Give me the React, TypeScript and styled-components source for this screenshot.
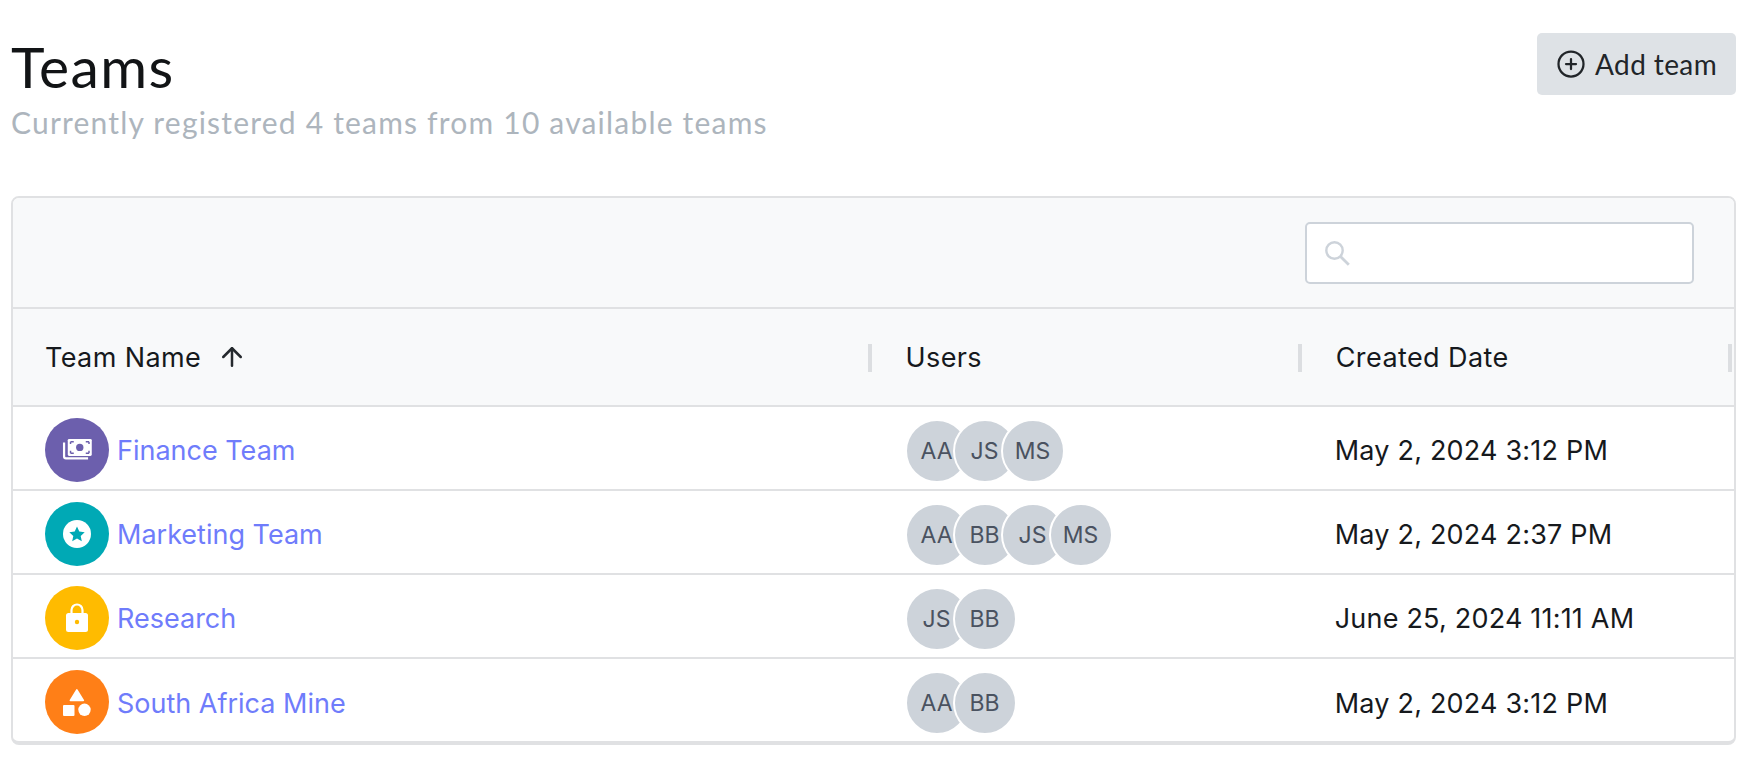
import React from "react";
import styled, { createGlobalStyle } from "styled-components";
import { ArrowUp, CirclePlus } from "lucide-react";

const GlobalStyle = createGlobalStyle`
  html, body {
    margin: 0;
    background: #ffffff;
    font-family: Inter, "Liberation Sans", sans-serif;
  }
`;

const SearchIcon = () => (
  <svg width="25" height="25" viewBox="0 0 25 25" fill="none" stroke="#cdd3da">
    <circle cx="9.5" cy="9.5" r="8.2" strokeWidth="2.4" />
    <path d="M15.5 15.5l8.3 8.3" strokeWidth="2.8" />
  </svg>
);

const MoneyIcon = () => (
  <svg width="30" height="24" viewBox="0 0 32 26" fill="none">
    <path d="M2 5v15a2 2 0 0 0 2 2h24" stroke="#fff" strokeWidth="2.4" />
    <rect x="6" y="1" width="26" height="18.5" rx="1.5" fill="#fff" />
    <circle cx="19" cy="10.2" r="4" fill="#6c5fad" />
    <path d="M9 4h3.5M9 4v2.6M29 4h-3.5M29 4v2.6M9 16.4h3.5M9 16.4v-2.6M29 16.4h-3.5M29 16.4v-2.6" stroke="#6c5fad" strokeWidth="1.6" />
  </svg>
);

const StarIcon = () => (
  <svg width="28" height="28" viewBox="0 0 28 28">
    <circle cx="14" cy="14" r="14" fill="#fff" />
    <path d="M14 6.6l2.3 5 5.4.6-4 3.7 1.1 5.4-4.8-2.7-4.8 2.7 1.1-5.4-4-3.7 5.4-.6z" fill="#00a9b5" />
  </svg>
);

const LockIcon = () => (
  <svg width="24" height="29" viewBox="0 0 24 29" fill="none">
    <path d="M6.5 12V7a5.5 5.5 0 0 1 11 0v5" stroke="#fff" strokeWidth="2.2" />
    <rect x="1" y="10" width="22" height="19" rx="2.5" fill="#fff" />
    <circle cx="12" cy="19" r="2.2" fill="#ffbb00" />
  </svg>
);

const ShapesIcon = () => (
  <svg width="28" height="27" viewBox="0 0 28 27" fill="#fff">
    <path d="M13 0.8a1 1 0 0 1 1.7 0l6.3 10.2a.8.8 0 0 1-.7 1.2H7.4a.8.8 0 0 1-.7-1.2z" />
    <rect x="0" y="16" width="11.5" height="11" rx="1" />
    <circle cx="21.5" cy="20.8" r="6.2" />
  </svg>
);

const teams = [
  { name: "Finance Team", color: "#6c5fad", icon: <MoneyIcon />, users: ["AA", "JS", "MS"], date: "May 2, 2024 3:12 PM" },
  { name: "Marketing Team", color: "#00a9b5", icon: <StarIcon />, users: ["AA", "BB", "JS", "MS"], date: "May 2, 2024 2:37 PM" },
  { name: "Research", color: "#ffbb00", icon: <LockIcon />, users: ["JS", "BB"], date: "June 25, 2024 11:11 AM" },
  { name: "South Africa Mine", color: "#ff7f17", icon: <ShapesIcon />, users: ["AA", "BB"], date: "May 2, 2024 3:12 PM" },
];

export default function App() {
  return (
    <Page>
      <GlobalStyle />
      <Header>
        <div>
          <Title>Teams</Title>
          <Subtitle>Currently registered 4 teams from 10 available teams</Subtitle>
        </div>
        <AddButton>
          <CirclePlus size={30} strokeWidth={1.8} />
          Add team
        </AddButton>
      </Header>

      <Card>
        <Toolbar>
          <SearchBox>
            <SearchIcon />
          </SearchBox>
        </Toolbar>
        <Table>
          <colgroup>
            <col style={{ width: "50%" }} />
            <col style={{ width: "25%" }} />
            <col style={{ width: "25%" }} />
          </colgroup>
          <thead>
            <tr>
              <HeadCell>
                <HeadLabel>
                  Team Name
                  <ArrowUp size={30} strokeWidth={2} color="#25292e" />
                </HeadLabel>
              </HeadCell>
              <HeadCell>Users</HeadCell>
              <HeadCell>Created Date</HeadCell>
            </tr>
          </thead>
          <tbody>
            {teams.map((team) => (
              <tr key={team.name}>
                <Cell>
                  <NameWrap>
                    <TeamBadge $color={team.color}>{team.icon}</TeamBadge>
                    <TeamLink href="#">{team.name}</TeamLink>
                  </NameWrap>
                </Cell>
                <Cell>
                  <Stack>
                    {team.users.map((user) => (
                      <Avatar key={user}>{user}</Avatar>
                    ))}
                  </Stack>
                </Cell>
                <DateCell>{team.date}</DateCell>
              </tr>
            ))}
          </tbody>
        </Table>
      </Card>
    </Page>
  );
}

const Page = styled.div`
  box-sizing: border-box;
  width: 1756px;
  height: 782px;
  padding: 33px 20px 0 11px;
  overflow: hidden;
  color: #16191d;
`;

const Header = styled.header`
  display: flex;
  justify-content: space-between;
  align-items: flex-start;
  height: 163px;
`;

const Title = styled.h1`
  margin: 0;
  font-family: Lato, sans-serif;
  font-size: 57px;
  font-weight: 400;
  line-height: 66px;
  letter-spacing: 1.4px;
  color: #121416;
`;

const Subtitle = styled.p`
  margin: 3px 0 0;
  font-family: Lato, sans-serif;
  font-size: 30px;
  line-height: 40px;
  letter-spacing: 1.2px;
  color: #adb5bd;
`;

const AddButton = styled.button`
  display: flex;
  align-items: center;
  gap: 9px;
  box-sizing: border-box;
  width: 199px;
  height: 62px;
  padding: 0 16px 0 19px;
  border: 0;
  border-radius: 5px;
  background: #dee2e6;
  font-family: Lato, sans-serif;
  font-size: 28px;
  letter-spacing: 0.4px;
  white-space: nowrap;
  color: #212529;
`;

const Card = styled.section`
  box-sizing: border-box;
  height: 549px;
  border: 2px solid #e0e1e3;
  border-bottom-width: 4px;
  border-radius: 8px;
  overflow: hidden;
`;

const Toolbar = styled.div`
  display: flex;
  justify-content: flex-end;
  box-sizing: border-box;
  height: 111px;
  padding: 24px 40px 0 0;
  border-bottom: 2px solid #e0e1e3;
  background: #f8f9fa;
`;

const SearchBox = styled.div`
  display: flex;
  align-items: center;
  box-sizing: border-box;
  width: 389px;
  height: 62px;
  padding-left: 18px;
  border: 2px solid #cdd3da;
  border-radius: 5px;
  background: #ffffff;
`;

const Table = styled.table`
  width: 100%;
  table-layout: fixed;
  border-collapse: collapse;
  font-size: 27px;
`;

const HeadCell = styled.th`
  position: relative;
  box-sizing: border-box;
  height: 97px;
  padding: 0 32px;
  border-bottom: 2px solid #e0e1e3;
  background: #f8f9fa;
  text-align: left;
  font-weight: 400;
  letter-spacing: 0.4px;
  color: #16191d;

  &::after {
    content: "";
    position: absolute;
    top: 35px;
    right: 2px;
    width: 4px;
    height: 28px;
    background: #dcdee1;
  }
`;

const HeadLabel = styled.span`
  display: inline-flex;
  align-items: center;
  gap: 16px;
`;

const Cell = styled.td`
  box-sizing: border-box;
  height: 84px;
  padding: 3px 32px 0;
  border-bottom: 2px solid #e0e1e3;

  tr:last-child > & {
    border-bottom: 0;
  }
`;

const DateCell = styled(Cell)`
  padding: 5px 0 0 31px;
  white-space: nowrap;
  letter-spacing: 0.2px;
  color: #16191d;
`;

const NameWrap = styled.div`
  display: flex;
  align-items: center;
  gap: 8px;
`;

const TeamBadge = styled.span<{ $color: string }>`
  display: flex;
  align-items: center;
  justify-content: center;
  flex: none;
  width: 64px;
  height: 64px;
  border-radius: 50%;
  background: ${({ $color }) => $color};
`;

const TeamLink = styled.a`
  padding-top: 2px;
  color: #6f7cfb;
  text-decoration: none;
`;

const Stack = styled.div`
  display: flex;
  margin: 2px 0 0 -1px;
`;

const Avatar = styled.span`
  display: flex;
  align-items: center;
  justify-content: center;
  box-sizing: border-box;
  width: 64px;
  height: 64px;
  margin-left: -16px;
  border: 2px solid #ffffff;
  border-radius: 50%;
  background: #cdd3da;
  font-size: 23px;
  color: #4a5260;

  &:first-child {
    margin-left: 0;
  }
`;
